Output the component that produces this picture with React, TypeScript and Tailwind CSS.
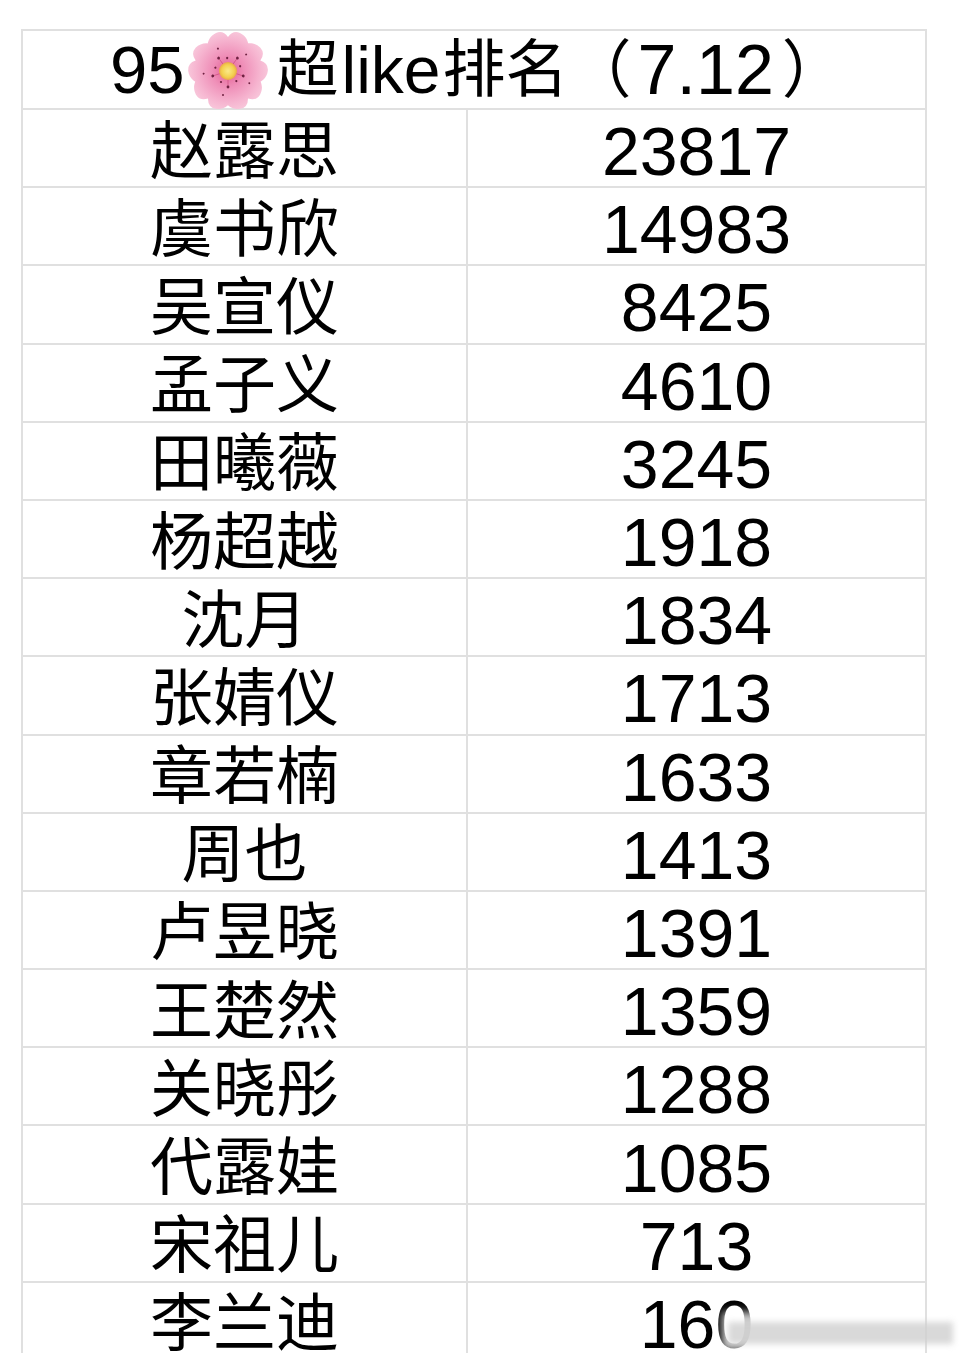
import React from "react";

const rows: [string, string][] = [
  ["赵露思", "23817"],
  ["虞书欣", "14983"],
  ["吴宣仪", "8425"],
  ["孟子义", "4610"],
  ["田曦薇", "3245"],
  ["杨超越", "1918"],
  ["沈月", "1834"],
  ["张婧仪", "1713"],
  ["章若楠", "1633"],
  ["周也", "1413"],
  ["卢昱晓", "1391"],
  ["王楚然", "1359"],
  ["关晓彤", "1288"],
  ["代露娃", "1085"],
  ["宋祖儿", "713"],
  ["李兰迪", "160"],
];

const FONT = "font-['Liberation_Sans','Noto_Sans_CJK_SC',sans-serif]";

function Blossom() {
  const petals = [0, 72, 144, 216, 288];
  return (
    <svg width="82" height="78" viewBox="-41 -40 82 78" className="mx-[2px] inline-block shrink-0">
      <defs>
        <radialGradient id="petal" cx="0" cy="0" r="40" gradientUnits="userSpaceOnUse">
          <stop offset="0" stopColor="#e25d93" />
          <stop offset="0.4" stopColor="#ef8fb8" />
          <stop offset="0.8" stopColor="#f6b5d0" />
          <stop offset="1" stopColor="#f8c6da" />
        </radialGradient>
        <radialGradient id="core" cx="0" cy="0" r="9" gradientUnits="userSpaceOnUse">
          <stop offset="0" stopColor="#fbe98a" />
          <stop offset="0.7" stopColor="#f3cf4e" />
          <stop offset="1" stopColor="#e9a64a" />
        </radialGradient>
      </defs>
      {petals.map((a) => (
        <path
          key={a}
          transform={`rotate(${a})`}
          d="M0,-1 C-22,-6 -27,-31 -12,-38 Q-5,-41 0,-34 Q5,-41 12,-38 C27,-31 22,-6 0,-1Z"
          fill="url(#petal)"
        />
      ))}
      {petals.map((a) => (
        <g key={`d${a}`} transform={`rotate(${a + 36})`}>
          <line x1="0" y1="-6" x2="0" y2="-15" stroke="#c9457a" strokeWidth="0.6" />
          <circle cx="0" cy="-16" r="1.4" fill="#6e2040" />
          <circle cx="7" cy="-11" r="1.1" fill="#6e2040" />
          <circle cx="5" cy="-24" r="1" fill="#6e2040" />
        </g>
      ))}
      <circle r="9" fill="url(#core)" />
    </svg>
  );
}

export default function App() {
  return (
    <div className={`relative h-[1353px] w-[960px] overflow-hidden bg-white text-black ${FONT}`}>
      <div className="ml-[21px] mt-[29px] w-[906px] border-l-2 border-t-2 border-[#e0e0e0]">
        {/* title row spans both columns */}
        <div className="flex h-[79px] items-center border-b-2 border-r-2 border-[#e0e0e0] pl-[87px] leading-none">
          <span className="text-[67px]">95</span>
          <Blossom />
          <span className="ml-[6px] text-[62px]">超</span>
          <span className="ml-[3px] text-[66px]">like</span>
          <span className="ml-[2px] text-[63px]">排名（</span>
          <span className="ml-[6px] text-[70px]">7.12</span>
          <span className="ml-[8px] text-[63px]">）</span>
        </div>
        {rows.map(([name, n]) => (
          <div key={name} className="grid h-[78.2px] grid-cols-[445px_1fr]">
            <div className="flex items-center justify-center border-b-2 border-r-2 border-[#e0e0e0] pt-[6px] text-[63px] leading-none">
              {name}
            </div>
            <div className="flex items-center justify-center border-b-2 border-r-2 border-[#e0e0e0] pt-[6px] text-[68px] leading-none">
              {n}
            </div>
          </div>
        ))}
      </div>
      {/* blurred watermark over the last row */}
      <div className="absolute left-[722px] top-[1312px] h-[38px] w-[40px] bg-white/80 blur-[4px]" />
      <div className="absolute left-[728px] top-[1322px] h-[22px] w-[225px] bg-[#cfcfcf]/80 blur-[3px]" />
    </div>
  );
}
